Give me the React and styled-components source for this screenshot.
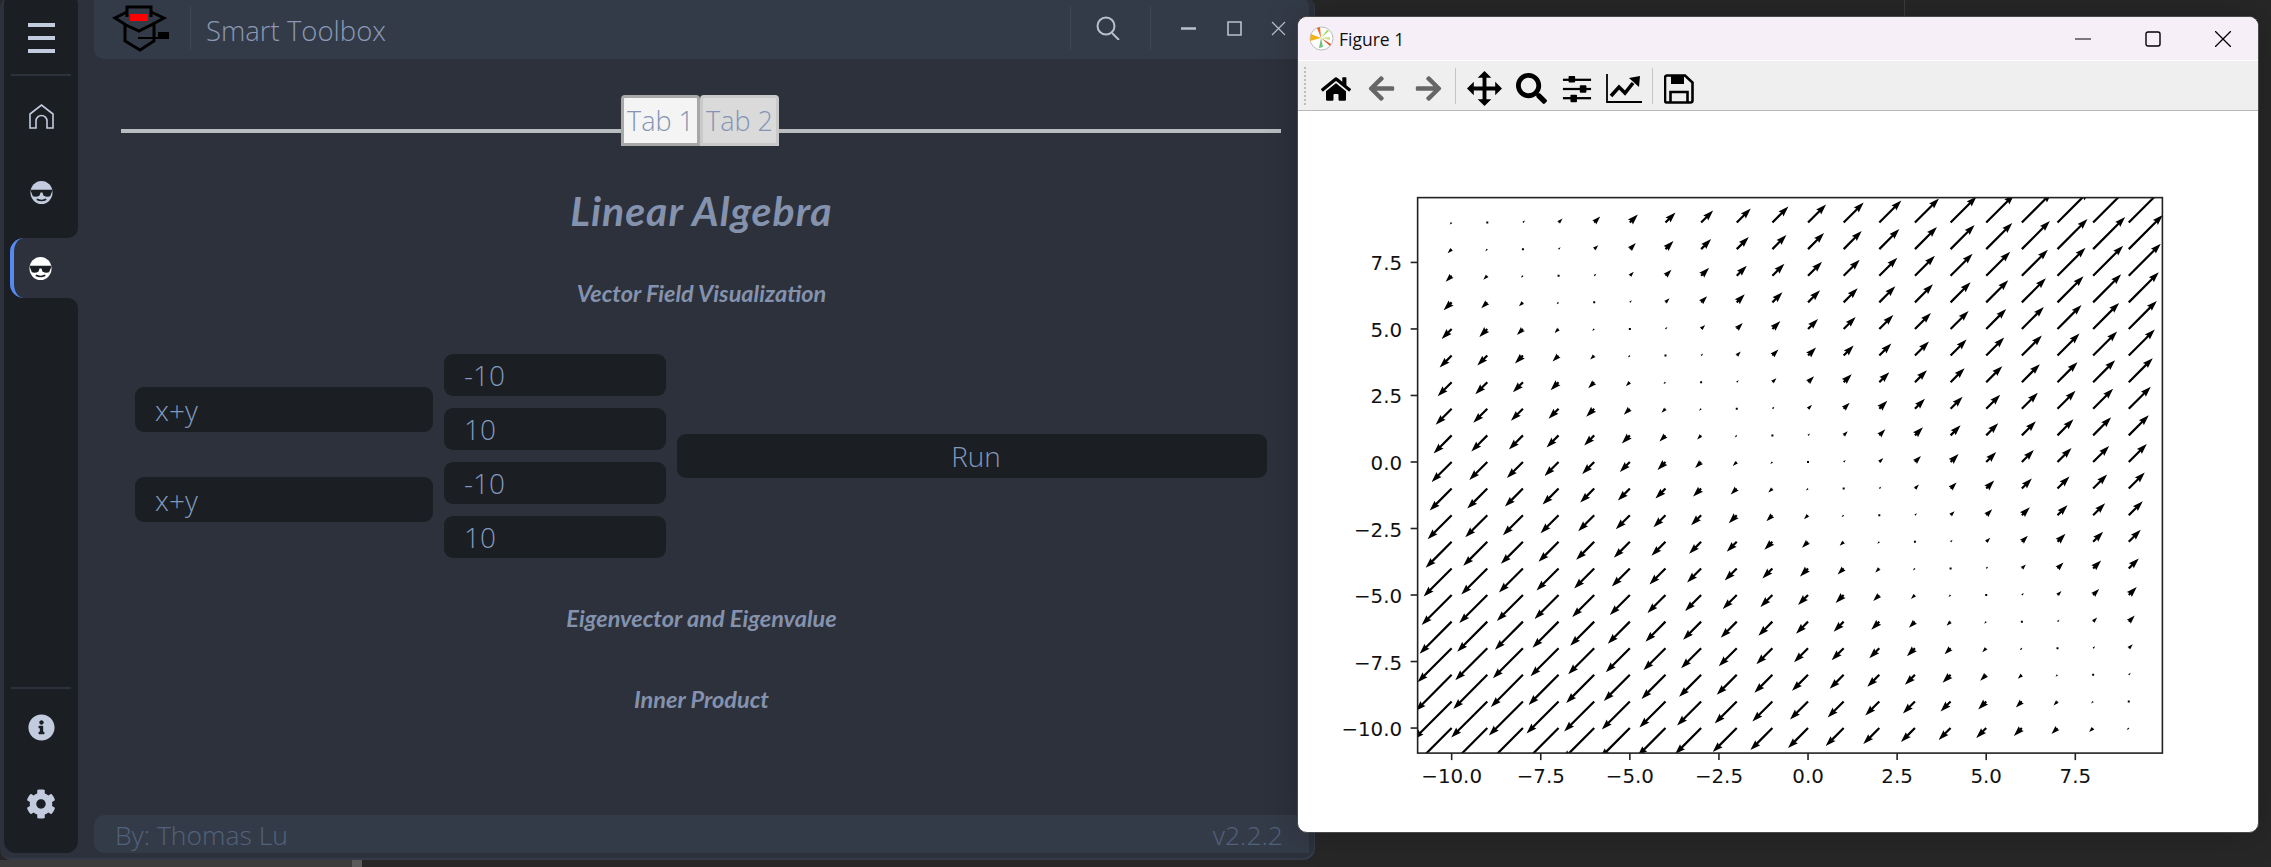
import styled, { createGlobalStyle } from 'styled-components';
import { FaHome, FaArrowLeft, FaArrowRight, FaSearch, FaInfoCircle, FaCog } from 'react-icons/fa';

const GlobalStyle = createGlobalStyle`
  html, body {
    margin: 0;
    padding: 0;
    width: 2271px;
    height: 867px;
    overflow: hidden;
    background: #272727;
  }
  * { box-sizing: border-box; }
`;

const Desktop = styled.div`
  position: relative;
  width: 2271px;
  height: 867px;
  overflow: hidden;
  background: #272727;
  font-family: 'Open Sans', 'Liberation Sans', sans-serif;
`;

const BottomStrip = styled.div`
  position: absolute;
  left: 0;
  bottom: 0;
  width: 362px;
  height: 7px;
  background: #3b3b3b;
  border-right: 10px solid #5a5a5a;
`;

const DesktopLine = styled.div`
  position: absolute;
  left: 1904px;
  top: 0;
  width: 1px;
  height: 17px;
  background: #3c3c3c;
`;

/* ---- app window ---- */
const AppWindow = styled.div`
  position: absolute;
  left: 0;
  top: -4px;
  width: 1315px;
  height: 864px;
  display: flex;
  gap: 16px;
  padding: 0 6px 7px 4px;
  background: #2c313c;
  border-radius: 12px;
  box-shadow: inset -1px -2px 0 #343b48;
`;

const Sidebar = styled.div`
  width: 74px;
  flex-shrink: 0;
  display: flex;
  flex-direction: column;
`;

const SideTop = styled.div`
  height: 242px;
  background: #1b1e23;
  border-radius: 8px 8px 10px 0;
  display: flex;
  flex-direction: column;
  align-items: center;
`;

const SideBottom = styled.div`
  flex: 1;
  background: #1b1e23;
  border-radius: 0 10px 12px 12px;
  display: flex;
  flex-direction: column;
  align-items: center;
  justify-content: flex-end;
  padding-bottom: 10px;
`;

const Burger = styled.div`
  height: 80px;
  width: 60px;
  flex-shrink: 0;
  padding-top: 27px;
  border-bottom: 2px solid #2c313c;
  display: flex;
  flex-direction: column;
  align-items: center;
  gap: 9px;
  span {
    width: 27px;
    height: 4px;
    background: #c3ccdf;
  }
`;

const SideItem = styled.div`
  width: 100%;
  height: ${(p) => p.$h}px;
  flex-shrink: 0;
  display: flex;
  align-items: center;
  justify-content: center;
  color: #c3ccdf;
  font-size: ${(p) => p.$size || 30}px;
`;

const ActiveRow = styled.div`
  height: 60px;
  flex-shrink: 0;
  background: linear-gradient(90deg, #1b1e23 20px, #2c313c 20px);
`;

const ActiveItem = styled.div`
  height: 60px;
  margin-left: 6px;
  display: flex;
  align-items: center;
  justify-content: center;
  padding-right: 11px;
  background: #2c313c;
  border-left: 4px solid #568af2;
  border-radius: 14px 0 0 14px;
`;

const BottomRule = styled.div`
  width: 60px;
  height: 2px;
  margin-bottom: 1px;
  background: #2c313c;
`;

const Main = styled.div`
  flex: 1;
  display: flex;
  flex-direction: column;
  min-width: 0;
`;

const Header = styled.div`
  height: 63px;
  flex-shrink: 0;
  display: flex;
  align-items: center;
  padding-top: 4px;
  background: #343b48;
  border-radius: 0 12px 10px 10px;
`;

const Logo = styled.svg`
  width: 96px;
  height: 59px;
  flex-shrink: 0;
`;

const VRule = styled.div`
  width: 1px;
  height: 44px;
  margin-top: -3px;
  background: #3e4655;
`;

const AppTitle = styled.div`
  margin-left: 15px;
  padding-top: 1px;
  flex: 1;
  font-size: 27.5px;
  font-weight: 300;
  color: #8a99b5;
`;

const SearchBox = styled.div`
  width: 79px;
  height: 44px;
  margin-top: -3px;
  padding-right: 5px;
  display: flex;
  align-items: center;
  justify-content: center;
  color: #b8c0d0;
`;

const Caption = styled.div`
  display: flex;
  width: 158px;
  height: 44px;
  margin-top: -3px;
  align-items: center;
  color: #b8c0d0;
  justify-content: space-between;
  padding: 0 23px 0 30px;
`;

const Content = styled.div`
  flex: 1;
  display: flex;
  flex-direction: column;
  min-height: 0;
`;

const TabBar = styled.div`
  position: relative;
  height: 51px;
  margin: 36px 28px 0 27px;
  display: flex;
  justify-content: center;
  padding-right: 2px;
  &::before {
    content: '';
    position: absolute;
    left: 0;
    right: 0;
    top: 34px;
    height: 4px;
    background: #b9bdc0;
  }
`;

const Tab = styled.div`
  position: relative;
  width: ${(p) => p.$w}px;
  height: 51px;
  display: flex;
  align-items: center;
  justify-content: center;
  font-size: 27px;
  font-weight: 300;
  color: #8394b3;
  background: ${(p) => (p.$active ? '#f4f4f4' : '#dadada')};
  border: 3px solid ${(p) => (p.$active ? '#a8a8a8' : '#c9c9c9')};
  border-radius: 4px 4px 0 0;
`;

const Heading = styled.h1`
  margin: 48px 0 0;
  height: 34px;
  line-height: 34px;
  text-align: center;
  font-family: 'Lato', sans-serif;
  font-style: italic;
  font-size: 41px;
  font-weight: 700;
  letter-spacing: 1px;
  color: #8492ad;
`;

const SubHeading = styled.h2`
  margin: ${(p) => p.$top}px 0 0;
  height: 30px;
  line-height: 30px;
  text-align: center;
  font-family: 'Lato', sans-serif;
  font-style: italic;
  font-size: 23.5px;
  font-weight: 700;
  color: #8492ad;
`;

const FormRow = styled.div`
  height: 204px;
  margin: 46px 42px 0 41px;
  display: flex;
  align-items: center;
  gap: 11px;
`;

const Col = styled.div`
  width: ${(p) => p.$w}px;
  flex-shrink: 0;
  display: flex;
  flex-direction: column;
  gap: ${(p) => p.$gap}px;
  margin-top: ${(p) => p.$shift || 0}px;
`;

const Field = styled.div`
  height: ${(p) => p.$h}px;
  display: flex;
  align-items: center;
  padding-left: 20px;
  background: #1b1e23;
  border-radius: 9px;
  font-size: 28px;
  font-weight: 300;
  color: #8099bd;
`;

const RunButton = styled.div`
  flex: 1;
  height: 44px;
  display: flex;
  align-items: center;
  justify-content: center;
  padding-left: 8px;
  background: #1b1e23;
  border-radius: 9px;
  font-size: 28px;
  font-weight: 300;
  color: #8099bd;
`;

const Footer = styled.div`
  height: 38px;
  flex-shrink: 0;
  display: flex;
  align-items: center;
  justify-content: space-between;
  padding: 2px 26px 0 21px;
  background: #343b48;
  border-radius: 10px 10px 0 10px;
  font-size: 26.5px;
  font-weight: 300;
  color: #52627a;
`;

/* ---- figure window ---- */
const FigureWindow = styled.div`
  position: absolute;
  left: 1297px;
  top: 16px;
  width: 962px;
  height: 817px;
  display: flex;
  flex-direction: column;
  overflow: hidden;
  background: #fff;
  border: 1.5px solid #4a4a4a;
  border-radius: 10px;
  box-shadow: 0 0 34px rgba(0, 0, 0, 0.22);
`;

const TitleBar = styled.div`
  height: 44px;
  flex-shrink: 0;
  display: flex;
  align-items: center;
  padding-left: 11px;
  background: #f6eff7;
  border-bottom: 1px solid #fff;
`;

const WindowTitle = styled.div`
  margin-left: 5px;
  flex: 1;
  font-size: 17.5px;
  color: #111;
`;

const FigCaption = styled.div`
  display: flex;
  align-items: center;
  gap: 54px;
  padding-right: 27px;
`;

const Toolbar = styled.div`
  height: 50px;
  flex-shrink: 0;
  display: flex;
  align-items: center;
  padding-top: 6px;
  background: #efefef;
  border-bottom: 1.5px solid #b9b9b9;
`;

const Grip = styled.div`
  width: 0;
  height: 38px;
  margin: -6px 8px 0 6px;
  border-left: 2px dotted #bdbdbd;
`;

const ToolButton = styled.div`
  width: ${(p) => p.$w || 46}px;
  height: 40px;
  display: flex;
  align-items: center;
  justify-content: center;
  flex-shrink: 0;
  color: ${(p) => (p.$muted ? '#666' : '#000')};
  font-size: ${(p) => p.$size || 30}px;
`;

const ToolRule = styled.div`
  width: 1px;
  height: 36px;
  margin: -6px 4px 0;
  background: #c4c4c4;
  flex-shrink: 0;
`;

const Chart = styled.svg`
  flex: 1;
  display: block;
  width: 100%;
  font-family: 'DejaVu Sans', sans-serif;
  font-size: 19.8px;
  fill: #111;
`;

/* plot geometry, page pixels */
const AX = { left: 1418, right: 2162, top: 198, bottom: 752.7 };
const px = (x) => 1452 + 35.6 * (x + 10);
const py = (y) => 727.7 - 26.57 * (y + 10);
const XTICKS = [-10, -7.5, -5, -2.5, 0, 2.5, 5, 7.5];
const label = (v) => (v < 0 ? '\u2212' : '') + Math.abs(v).toFixed(1);

// same polygon as matplotlib's quiver
function arrowPath(x0, y0, u) {
  const w = 2.2;
  const headLen = 10.5;
  const headAxis = 9.5;
  const headW = 7;
  const dx = u * 2;
  const dy = -u * 2;
  const len = Math.hypot(dx, dy);
  if (len < 1) {
    return `M${x0 - 1} ${y0 - 1}h2v2h-2z`;
  }
  const k = len < headLen ? len / headLen : 1;
  const pts = [
    [0, (w * k) / 2],
    [len - headAxis * k, (w * k) / 2],
    [len - headLen * k, (headW * k) / 2],
    [len, 0],
    [len - headLen * k, (-headW * k) / 2],
    [len - headAxis * k, (-w * k) / 2],
    [0, (-w * k) / 2],
  ];
  const c = dx / len;
  const s = dy / len;
  return (
    'M' +
    pts
      .map(([a, b]) => `${(x0 + a * c - b * s).toFixed(2)} ${(y0 + a * s + b * c).toFixed(2)}`)
      .join('L') +
    'z'
  );
}

function buildField() {
  let d = '';
  for (let x = -10; x < 10; x++) {
    for (let y = -10; y < 10; y++) {
      d += arrowPath(px(x), py(y), x + y);
    }
  }
  return d;
}

function VectorPlot() {
  return (
    <Chart viewBox="1298.5 111.5 959 720" preserveAspectRatio="none">
      <clipPath id="axes">
        <rect x={AX.left} y={AX.top} width={AX.right - AX.left} height={AX.bottom - AX.top} />
      </clipPath>
      <path d={buildField()} fill="#000" clipPath="url(#axes)" />
      <rect
        x={AX.left}
        y={AX.top}
        width={AX.right - AX.left}
        height={AX.bottom - AX.top}
        fill="none"
        stroke="#222"
        strokeWidth="1.6"
      />
      {XTICKS.map((v) => (
        <g key={v}>
          <line x1={px(v)} x2={px(v)} y1={AX.bottom} y2={AX.bottom + 7} stroke="#222" strokeWidth="1.6" />
          <text x={px(v)} y={783} textAnchor="middle">{label(v)}</text>
          <line x1={AX.left - 7} x2={AX.left} y1={py(v)} y2={py(v)} stroke="#222" strokeWidth="1.6" />
          <text x={1402.5} y={py(v) + 8} textAnchor="end">{label(v)}</text>
        </g>
      ))}
    </Chart>
  );
}

/* ---- drawn icons ---- */
function HomeIcon() {
  return (
    <svg width="25" height="25" viewBox="0 0 25 25" fill="none" stroke="currentColor" strokeWidth="1.6">
      <path d="M1 24V10l11.5-9L24 10v14h-6v-7a5.500 5.500 0 0 0-11 0v7z" />
    </svg>
  );
}

function FaceIcon({ color }) {
  return (
    <svg width="23" height="23" viewBox="0 0 24 24">
      <ellipse cx="12" cy="12" rx="11.5" ry="12" fill={color} />
      <path d="M1 9h22v2l-2 5q-4 1-7-1l-1-3h-2l-1 3q-3 2-7 1L1 11z" fill="#1b1e23" />
      <path d="M7 19q5 2.5 10 0" stroke="#1b1e23" strokeWidth="1.6" fill="none" />
    </svg>
  );
}

function BrandLogo() {
  return (
    <Logo viewBox="94 0 96 59">
      <g fill="none" stroke="#000" strokeWidth="3">
        <path d="M127 17V7h24v10" />
        <path d="M127 12l-12 6 11 7 13 6 14-7 11-6-13-6" />
        <path d="M125 24v17l15 9 14-9V22" />
        <path d="M138 38h22" strokeWidth="2" />
      </g>
      <rect x="130" y="14" width="18" height="7" fill="#f00" />
      <rect x="158" y="32" width="11" height="7" fill="#000" />
    </Logo>
  );
}

function MplLogo() {
  return (
    <svg width="25" height="25" viewBox="0 0 25 25">
      <circle cx="12.5" cy="12.5" r="11.5" fill="#fff" stroke="#bbb" />
      <path d="M12 12L8 2l3-1z" fill="#ee6a1f" />
      <path d="M12 12L2 8l-1 7z" fill="#f3b31c" />
      <path d="M12 12l6-8 2 1z" fill="#9fd65a" />
      <path d="M12 12l2 9-4 1z" fill="#6ec27a" />
      <path d="M12 12l9 8 1-2z" fill="#d9561c" />
      <path d="M12 12l9-1v3z" fill="#cfe08a" />
    </svg>
  );
}

function MoveIcon() {
  return (
    <svg width="35" height="35" viewBox="0 0 36 36" fill="#000">
      <path d="M18 0l7 7h-5v9h9v-5l7 7-7 7v-5h-9v9h5l-7 7-7-7h5v-9H7v5l-7-7 7-7v5h9V7h-5z" />
    </svg>
  );
}

function SlidersIcon() {
  return (
    <svg width="30" height="28" viewBox="0 0 32 28" fill="#000">
      <rect x="1" y="3" width="30" height="2.4" />
      <rect x="1" y="12.8" width="30" height="2.4" />
      <rect x="1" y="22.6" width="30" height="2.4" />
      <rect x="7" y="0" width="7" height="7" rx="1" />
      <rect x="19" y="10" width="7" height="8" rx="1" />
      <rect x="9" y="20" width="7" height="8" rx="1" />
    </svg>
  );
}

function ChartIcon() {
  return (
    <svg width="36" height="30" viewBox="0 0 36 30">
      <path d="M1 0v28h35" fill="none" stroke="#000" strokeWidth="1.8" />
      <path d="M5 22l8-9 6 6 8-10" fill="none" stroke="#000" strokeWidth="3.6" />
      <path d="M23 4l11-2-1 11z" fill="#000" />
    </svg>
  );
}

function SaveIcon() {
  return (
    <svg width="30" height="30" viewBox="0 0 30 30" fill="none" stroke="#000" strokeWidth="2.6">
      <path d="M3 1.500h18l7.500 7v18a2 2 0 0 1-2 2H3a2 2 0 0 1-2-2v-23a2 2 0 0 1 2-2z" />
      <path d="M7 2v8h13V2z" fill="#000" stroke="none" />
      <path d="M6.500 28V18h17v10" />
    </svg>
  );
}

const CaptionIcon = ({ d, w = 15, h = 15, sw = 1.6 }) => (
  <svg width={w} height={h} viewBox={`0 0 ${w} ${h}`} fill="none" stroke="currentColor" strokeWidth={sw}>
    <path d={d} />
  </svg>
);

export default function App() {
  return (
    <>
      <GlobalStyle />
      <Desktop>
        <DesktopLine />
        <BottomStrip />
        <AppWindow>
          <Sidebar>
            <SideTop>
              <Burger>
                <span />
                <span />
                <span />
              </Burger>
              <SideItem $h={80}>
                <HomeIcon />
              </SideItem>
              <SideItem $h={72}>
                <FaceIcon color="#c3ccdf" />
              </SideItem>
            </SideTop>
            <ActiveRow>
              <ActiveItem>
                <FaceIcon color="#fff" />
              </ActiveItem>
            </ActiveRow>
            <SideBottom>
              <BottomRule />
              <SideItem $h={75} $size={27}>
                <FaInfoCircle />
              </SideItem>
              <SideItem $h={78} $size={30}>
                <FaCog />
              </SideItem>
            </SideBottom>
          </Sidebar>
          <Main>
            <Header>
              <BrandLogo />
              <VRule />
              <AppTitle>Smart Toolbox</AppTitle>
              <VRule />
              <SearchBox>
                <svg width="25" height="24" viewBox="0 0 25 24" fill="none" stroke="currentColor" strokeWidth="2">
                  <circle cx="10" cy="10" r="8.500" />
                  <path d="M16 17l7 7" />
                </svg>
              </SearchBox>
              <VRule />
              <Caption>
                <CaptionIcon d="M0 7.500h15" w={16} sw={2.5} />
                <CaptionIcon d="M1 1h13v13H1z" h={15} />
                <CaptionIcon d="M1 1l13 13M14 1L1 14" sw={1.2} />
              </Caption>
            </Header>
            <Content>
              <TabBar>
                <Tab $w={79} $active>Tab 1</Tab>
                <Tab $w={79}>Tab 2</Tab>
              </TabBar>
              <Heading>Linear Algebra</Heading>
              <SubHeading $top={50}>Vector Field Visualization</SubHeading>
              <FormRow>
                <Col $w={298} $gap={45} $shift={-3}>
                  <Field $h={45}>x+y</Field>
                  <Field $h={45}>x+y</Field>
                </Col>
                <Col $w={222} $gap={12}>
                  <Field $h={42}>-10</Field>
                  <Field $h={42}>10</Field>
                  <Field $h={42}>-10</Field>
                  <Field $h={42}>10</Field>
                </Col>
                <RunButton>Run</RunButton>
              </FormRow>
              <SubHeading $top={45}>Eigenvector and Eigenvalue</SubHeading>
              <SubHeading $top={51}>Inner Product</SubHeading>
            </Content>
            <Footer>
              <span>By: Thomas Lu</span>
              <span>v2.2.2</span>
            </Footer>
          </Main>
        </AppWindow>
        <FigureWindow>
          <TitleBar>
            <MplLogo />
            <WindowTitle>Figure 1</WindowTitle>
            <FigCaption>
              <svg width="16" height="16" viewBox="0 0 16 16" stroke="#000" strokeWidth="1.2"><path d="M0 8h16" /></svg>
              <svg width="16" height="16" viewBox="0 0 16 16" fill="none" stroke="#000" strokeWidth="1.4"><rect x="1" y="1" width="14" height="14" rx="2" /></svg>
              <svg width="16" height="16" viewBox="0 0 16 16" stroke="#000" strokeWidth="1.3"><path d="M0 0l16 16M16 0L0 16" /></svg>
            </FigCaption>
          </TitleBar>
          <Toolbar>
            <Grip />
            <ToolButton $w={44}><FaHome /></ToolButton>
            <ToolButton $w={47} $muted $size={29}><FaArrowLeft /></ToolButton>
            <ToolButton $w={46} $muted $size={29}><FaArrowRight /></ToolButton>
            <ToolRule />
            <ToolButton $w={48}><MoveIcon /></ToolButton>
            <ToolButton $w={46} $size={31}><FaSearch /></ToolButton>
            <ToolButton $w={46}><SlidersIcon /></ToolButton>
            <ToolButton $w={48}><ChartIcon /></ToolButton>
            <ToolRule />
            <ToolButton $w={44}><SaveIcon /></ToolButton>
          </Toolbar>
          <VectorPlot />
        </FigureWindow>
      </Desktop>
    </>
  );
}
